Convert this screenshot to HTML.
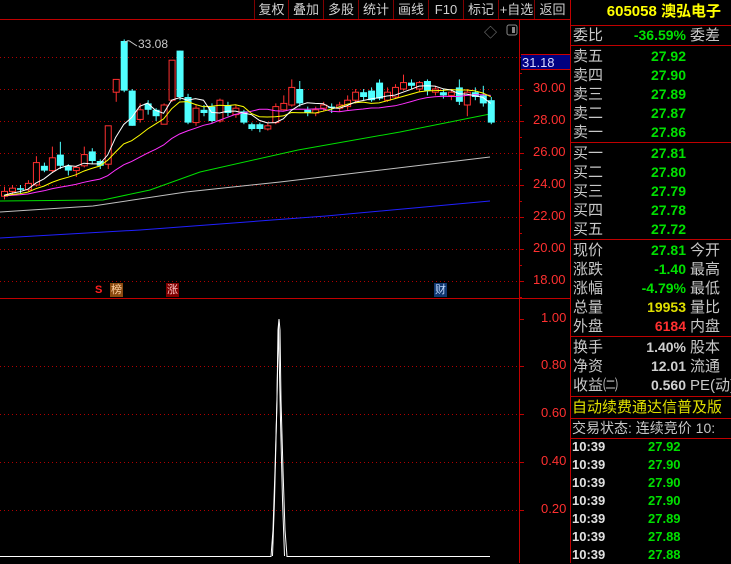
<!DOCTYPE html>
<html><head><meta charset="utf-8">
<style>
*{margin:0;padding:0;box-sizing:border-box}
body{width:731px;height:563px;background:#000;overflow:hidden;position:relative;font-family:"Liberation Sans","Noto Sans CJK SC","WenQuanYi Zen Hei",sans-serif;color:#c8c8c8}
.abs{position:absolute;white-space:nowrap}
.tb{position:absolute;top:0;height:19px;font-size:13px;line-height:19px;color:#d0d0d0;text-align:center;border-left:1px solid #800000}
.rp{position:absolute;left:570px;width:161px;font-size:15px;line-height:19px}
.lab{position:absolute;left:3px;color:#c8c8c8}
.val{position:absolute;right:45px;font-weight:bold;font-size:14px}
.lab2{position:absolute;left:120px;color:#c8c8c8}
.hl{position:absolute;left:570px;width:161px;height:1px;background:#c00000}
.g{color:#00e000}
.tr{position:absolute;left:572px;font-size:13px;font-weight:bold;color:#e0e0e0;line-height:18px}
.tr span{position:absolute;left:76px;color:#00e000}
</style></head><body>
<svg id="c" width="731" height="563" style="position:absolute;left:0;top:0"></svg>

<div class="tb" style="left:254px;width:34px">复权</div>
<div class="tb" style="left:288px;width:35px">叠加</div>
<div class="tb" style="left:323px;width:35px">多股</div>
<div class="tb" style="left:358px;width:35px">统计</div>
<div class="tb" style="left:393px;width:35px">画线</div>
<div class="tb" style="left:428px;width:35px">F10</div>
<div class="tb" style="left:463px;width:35px">标记</div>
<div class="tb" style="left:498px;width:36px">+自选</div>
<div class="tb" style="left:534px;width:36px">返回</div>

<div class="abs" style="left:138px;top:37px;font-size:12px;color:#c8c8c8">33.08</div>
<div class="abs" style="left:484px;top:22px;font-size:13px;color:#888">◇</div>

<div class="abs" style="left:521px;top:54px;width:49px;height:16px;background:#000080;border-top:1px solid #c00;border-bottom:1px solid #c00;color:#d8d8ff;font-size:13px;line-height:15px;padding-left:1px">31.18</div>

<div id="ax"></div>

<div class="abs" style="left:95px;top:284px;color:#ff2020;font-size:11px;font-weight:bold">S</div>
<div class="abs" style="left:110px;top:283px;width:13px;height:14px;background:#8a4a10;color:#ffd0a0;font-size:11px;line-height:14px;text-align:center">榜</div>
<div class="abs" style="left:166px;top:283px;width:13px;height:14px;background:#800000;color:#ffc0c0;font-size:11px;line-height:14px;text-align:center">涨</div>
<div class="abs" style="left:434px;top:283px;width:13px;height:14px;background:#103870;color:#c0d8ff;font-size:11px;line-height:14px;text-align:center">财</div>

<div class="rp" style="top:2px;height:22px;text-align:right;padding-right:10px;color:#ffff00;font-size:15px;font-weight:bold">605058 澳弘电子</div>
<div class="hl" style="top:25px"></div>
<div class="rp" style="top:26px"><span class="lab">委比</span><span class="val g">-36.59%</span><span class="lab2">委差</span></div>
<div class="hl" style="top:45px"></div>
<div class="rp" style="top:47px"><span class="lab">卖五</span><span class="val g">27.92</span></div>
<div class="rp" style="top:66px"><span class="lab">卖四</span><span class="val g">27.90</span></div>
<div class="rp" style="top:85px"><span class="lab">卖三</span><span class="val g">27.89</span></div>
<div class="rp" style="top:104px"><span class="lab">卖二</span><span class="val g">27.87</span></div>
<div class="rp" style="top:123px"><span class="lab">卖一</span><span class="val g">27.86</span></div>
<div class="hl" style="top:142px"></div>
<div class="rp" style="top:144px"><span class="lab">买一</span><span class="val g">27.81</span></div>
<div class="rp" style="top:163px"><span class="lab">买二</span><span class="val g">27.80</span></div>
<div class="rp" style="top:182px"><span class="lab">买三</span><span class="val g">27.79</span></div>
<div class="rp" style="top:201px"><span class="lab">买四</span><span class="val g">27.78</span></div>
<div class="rp" style="top:220px"><span class="lab">买五</span><span class="val g">27.72</span></div>
<div class="hl" style="top:239px"></div>
<div class="rp" style="top:241px"><span class="lab">现价</span><span class="val g">27.81</span><span class="lab2">今开</span></div>
<div class="rp" style="top:260px"><span class="lab">涨跌</span><span class="val g">-1.40</span><span class="lab2">最高</span></div>
<div class="rp" style="top:279px"><span class="lab">涨幅</span><span class="val g">-4.79%</span><span class="lab2">最低</span></div>
<div class="rp" style="top:298px"><span class="lab">总量</span><span class="val" style="color:#e0e000">19953</span><span class="lab2">量比</span></div>
<div class="rp" style="top:317px"><span class="lab">外盘</span><span class="val" style="color:#ff3030">6184</span><span class="lab2">内盘</span></div>
<div class="hl" style="top:336px"></div>
<div class="rp" style="top:338px"><span class="lab">换手</span><span class="val" style="color:#d0d0d0">1.40%</span><span class="lab2">股本</span></div>
<div class="rp" style="top:357px"><span class="lab">净资</span><span class="val" style="color:#d0d0d0">12.01</span><span class="lab2">流通</span></div>
<div class="rp" style="top:376px"><span class="lab">收益㈡</span><span class="val" style="color:#d0d0d0">0.560</span><span class="lab2">PE(动)</span></div>
<div class="hl" style="top:396px"></div>
<div class="rp" style="top:398px;color:#e0e000;padding-left:2px;overflow:hidden">自动续费通达信普及版</div>
<div class="hl" style="top:418px"></div>
<div class="rp" style="top:419px;padding-left:2px;overflow:hidden;font-size:14px">交易状态: 连续竞价 10:</div>
<div class="hl" style="top:438px"></div>
<div class="tr" style="top:438px">10:39<span>27.92</span></div>
<div class="tr" style="top:456px">10:39<span>27.90</span></div>
<div class="tr" style="top:474px">10:39<span>27.90</span></div>
<div class="tr" style="top:492px">10:39<span>27.90</span></div>
<div class="tr" style="top:510px">10:39<span>27.89</span></div>
<div class="tr" style="top:528px">10:39<span>27.88</span></div>
<div class="tr" style="top:546px">10:39<span>27.88</span></div>

<script>
var s='';
function Y(p){return 89+(30-p)*16;}
s+='<line x1="0" y1="19.5" x2="570" y2="19.5" stroke="#c00000"/>';
s+='<line x1="519.5" y1="19" x2="519.5" y2="563" stroke="#c00000"/>';
s+='<line x1="570.5" y1="0" x2="570.5" y2="563" stroke="#c00000"/>';
s+='<line x1="0" y1="298.5" x2="570" y2="298.5" stroke="#c00000"/>';
s+='<rect x="507" y="25" width="10" height="10" rx="2" fill="none" stroke="#888"/><rect x="512" y="27" width="3" height="6" fill="#888"/>';
var ax='';
[32,30,28,26,24,22,20,18].forEach(function(p){var y=Y(p);
 s+='<line x1="0" y1="'+(y+.5)+'" x2="519" y2="'+(y+.5)+'" stroke="#b00000" stroke-dasharray="1,3"/>';
 s+='<line x1="520" y1="'+(y+.5)+'" x2="524" y2="'+(y+.5)+'" stroke="#c00000"/>';
 if(p!=32) ax+='<div class="abs" style="left:533px;top:'+(y-9)+'px;color:#ff3030;font-size:13px">'+p.toFixed(2)+'</div>';
});
for(var p=31;p>=17;p-=2){var y=Y(p);s+='<line x1="520" y1="'+(y+.5)+'" x2="522" y2="'+(y+.5)+'" stroke="#c00000"/>';}
[[1,319],[.8,366],[.6,414],[.4,462],[.2,510]].forEach(function(a){
 if(a[0]<1) s+='<line x1="0" y1="'+(a[1]+.5)+'" x2="519" y2="'+(a[1]+.5)+'" stroke="#b00000" stroke-dasharray="1,3"/>';
 s+='<line x1="520" y1="'+(a[1]+.5)+'" x2="524" y2="'+(a[1]+.5)+'" stroke="#c00000"/>';
 ax+='<div class="abs" style="left:541px;top:'+(a[1]-9)+'px;color:#ff3030;font-size:13px">'+a[0].toFixed(2)+'</div>';
});
document.getElementById('ax').innerHTML=ax;
var d=[[23.3,23.6,23.9,23.1],[23.6,23.8,24.0,23.4],[23.8,23.7,24.0,23.5],[23.7,24.1,24.3,23.6],[24.0,25.4,25.8,23.9],[25.2,24.9,25.4,24.8],[24.9,25.7,26.4,24.8],[25.9,25.2,26.7,25.0],[25.2,24.9,25.3,24.6],[24.9,25.1,25.2,24.5],[25.2,25.9,26.4,25.1],[26.1,25.5,26.3,25.3],[25.5,25.2,25.6,25.0],[25.3,27.7,27.7,25.0],[29.8,30.6,30.6,29.2],[33.0,29.9,33.1,29.8],[29.9,27.7,30.0,27.7],[28.1,28.7,29.1,27.9],[29.1,28.7,29.3,28.4],[28.7,28.3,28.8,28.0],[27.8,29.0,29.1,27.8],[29.3,31.8,31.8,29.2],[32.4,29.5,32.4,29.3],[29.5,27.9,29.7,27.8],[27.9,28.8,29.0,27.7],[28.7,28.5,29.0,28.3],[28.9,28.0,29.1,27.9],[28.0,29.3,29.4,27.9],[29.0,28.5,29.2,28.3],[28.4,28.8,29.0,28.2],[28.6,27.9,28.7,27.8],[27.8,27.5,27.9,27.4],[27.8,27.5,27.9,27.3],[27.5,27.7,27.9,27.4],[27.9,28.9,29.1,27.8],[28.7,29.1,29.6,28.6],[29.0,30.1,30.6,28.9],[30.0,29.1,30.5,28.9],[28.7,28.5,28.9,28.3],[28.5,28.7,28.9,28.3],[28.8,29.0,29.2,28.6],[28.9,28.8,29.1,28.5],[28.8,29.0,29.2,28.6],[28.9,29.3,29.6,28.7],[29.3,29.8,30.0,29.1],[29.8,29.5,30.0,29.3],[29.9,29.3,30.1,29.2],[30.4,29.4,30.6,29.3],[29.3,29.8,30.1,29.2],[29.5,30.1,30.3,29.4],[30.0,30.4,30.9,29.9],[30.4,30.2,30.6,30.0],[30.0,30.4,30.5,29.8],[30.5,29.9,30.6,29.6],[29.8,30.0,30.2,29.6],[29.8,29.6,30.0,29.4],[29.6,29.8,30.0,29.3],[30.1,29.2,30.6,29.0],[29.0,29.8,30.0,28.3],[29.8,29.5,30.1,29.3],[29.6,29.1,30.2,28.9],[29.3,27.9,29.5,27.8]];
var sp=7.98,x0=4;
function ma(n){var pts=[];for(var i=0;i<d.length;i++){var t=0;for(var k=0;k<n;k++){var j=i-k;t+=(j<0?d[0][1]-0.3*(-j)/n*2:d[j][1]);}pts.push((x0+i*sp).toFixed(1)+','+Y(t/n).toFixed(1));}return pts.join(' ');}
function pl(str,c){s+='<polyline points="'+str+'" fill="none" stroke="'+c+'" stroke-width="1"/>';}
pl('0,238 140,230 326,216 490,201','#2020ff');
pl('0,212 93,206 186,192 280,182 490,157','#c0c0c0');
pl('0,201 103,200 150,190 200,172 298,150 400,132 490,114','#00e000');
for(var i=0;i<d.length;i++){var o=d[i][0],c=d[i][1],h=d[i][2],l=d[i][3],x=x0+i*sp;
 var up=c>=o,col=up?'#ff3030':'#50ffff';var t=Y(Math.max(o,c)),b=Y(Math.min(o,c));if(b-t<1)b=t+1;
 s+='<line x1="'+(x+.5)+'" y1="'+Y(h)+'" x2="'+(x+.5)+'" y2="'+Y(l)+'" stroke="'+col+'"/>';
 if(up) s+='<rect x="'+(x-2.5)+'" y="'+t+'" width="6" height="'+(b-t)+'" fill="#000" stroke="'+col+'"/>';
 else s+='<rect x="'+(x-3)+'" y="'+t+'" width="7" height="'+(b-t)+'" fill="'+col+'"/>';
}
pl(ma(20),'#ff30ff');pl(ma(10),'#ffff00');pl(ma(5),'#ffffff');
s+='<path d="M125 43 q3 -4 6 -1 l6 4" fill="none" stroke="#c8c8c8"/>';
s+='<polyline points="0,556.5 271,556.5 273,530 275,470 277,400 278,330 279,319 280,330 281,400 283,470 285,530 287,556.5 490,556.5" fill="none" stroke="#fff" stroke-width="1"/>';
s+='<polyline points="272.5,556 274.5,500 276.5,420 278.5,325 280.5,420 282.5,500 284.5,556" fill="none" stroke="#fff" stroke-width="1"/>';
document.getElementById('c').innerHTML=s;
</script>
</body></html>
